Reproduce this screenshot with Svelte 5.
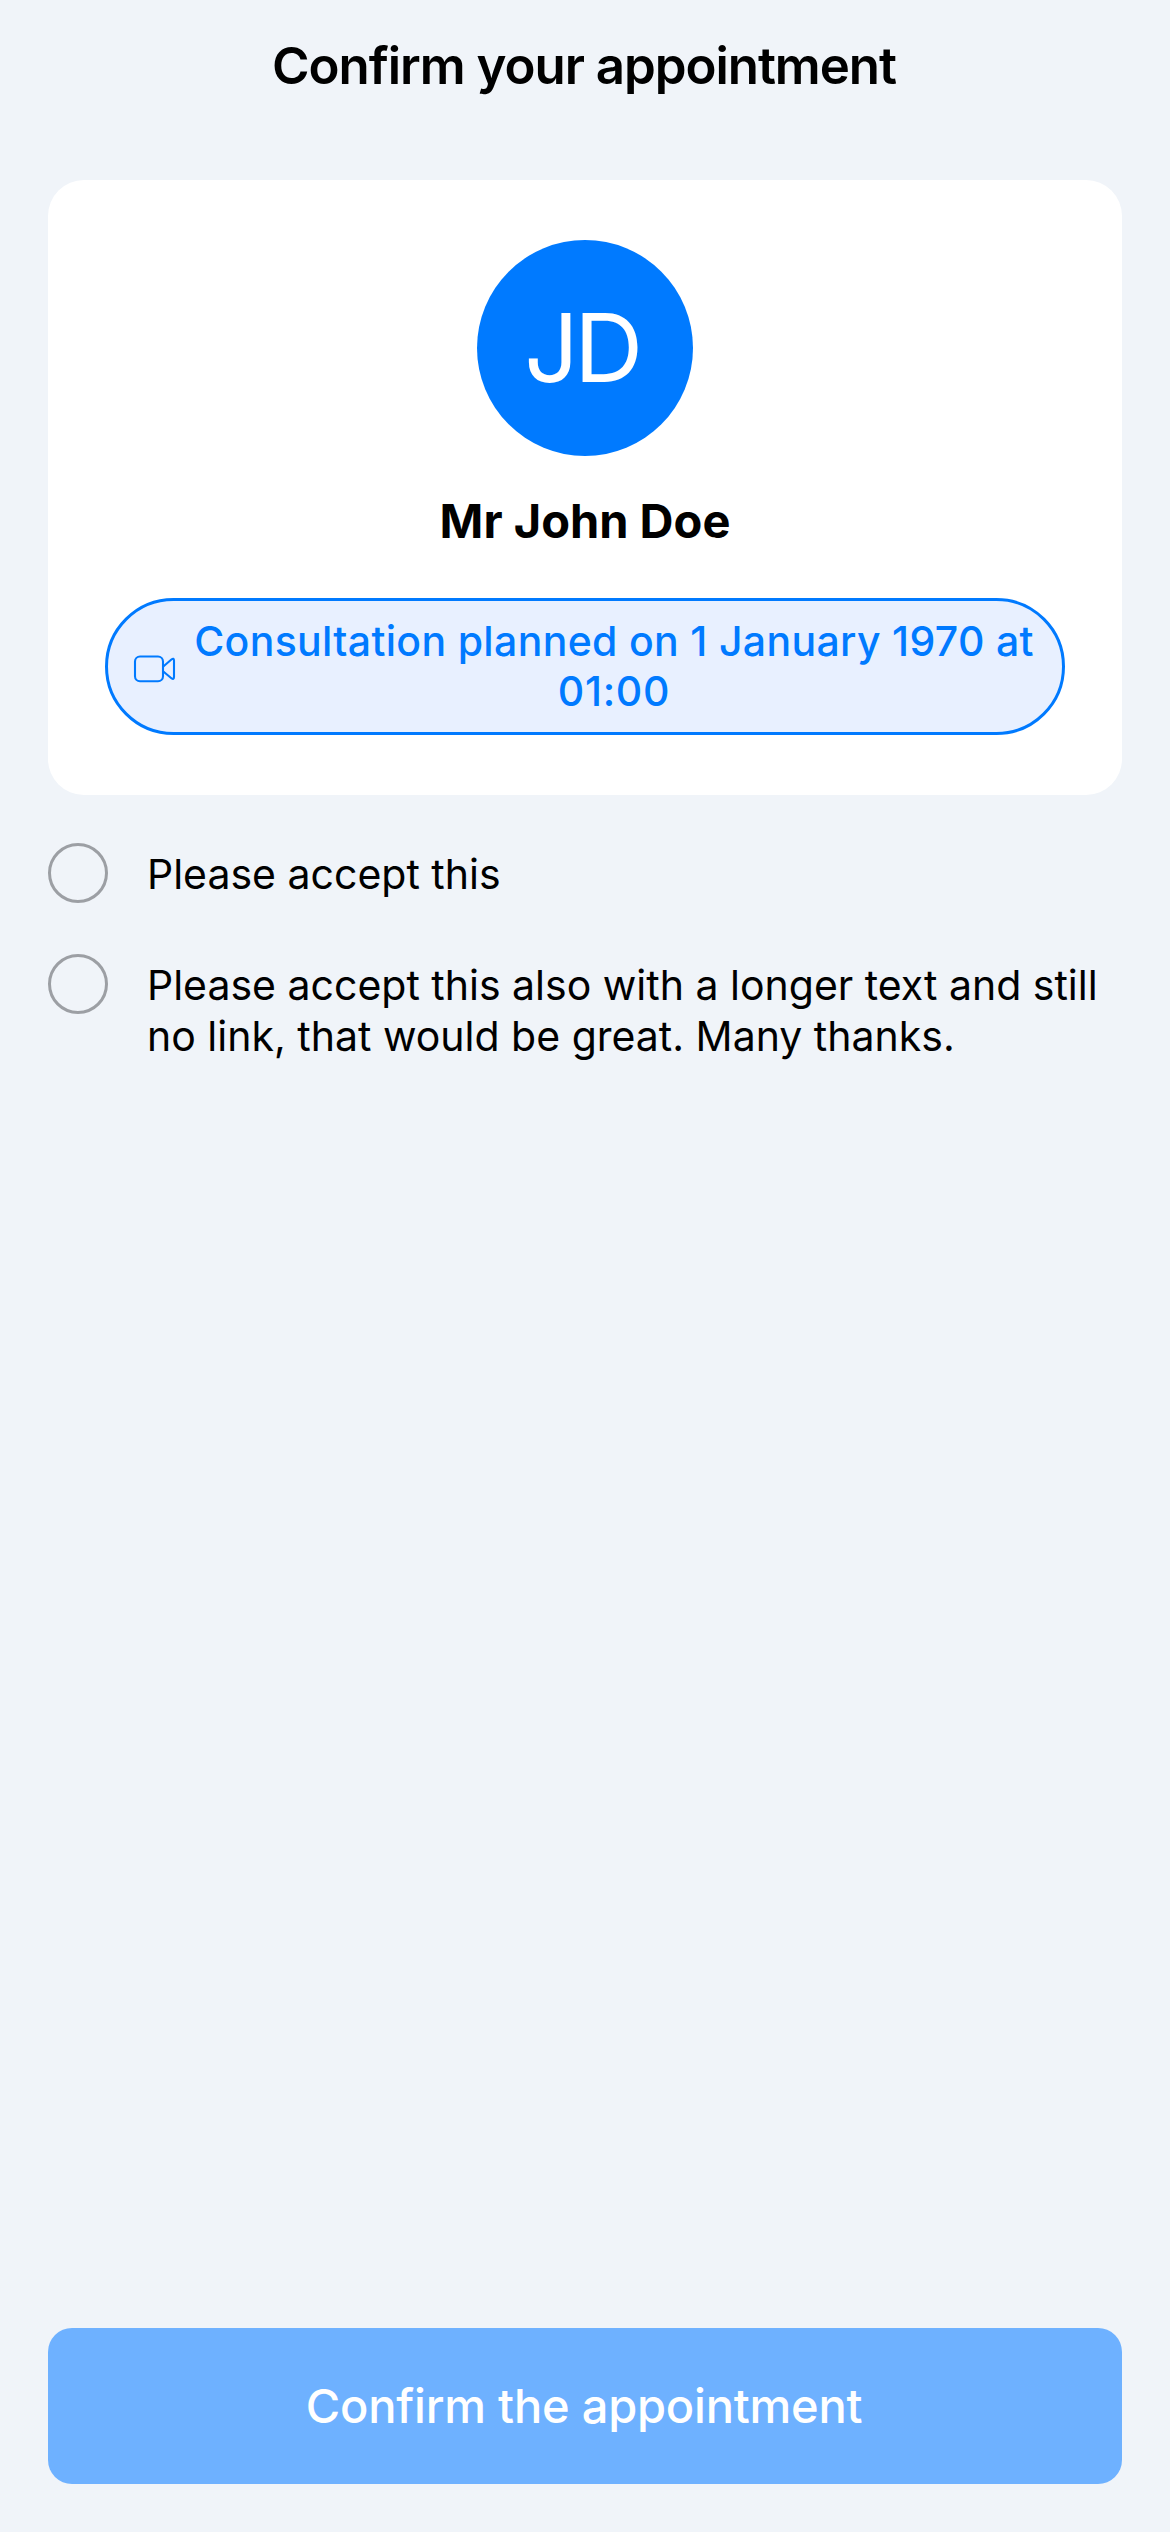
<script>
  const terms = [
    ['Please accept this'],
    ['Please accept this also with a longer text and still', 'no link, that would be great. Many thanks.'],
  ];
</script>

<main>
  <h1>Confirm your appointment</h1>
  <section class="card">
    <div class="avatar">JD</div>
    <h2>Mr John Doe</h2>
    <div class="pill">
      <svg viewBox="0 0 44 34" width="44" height="34" fill="none" stroke="currentColor" stroke-width="2.1" stroke-linejoin="round">
        <rect x="3" y="6.500" width="28" height="24.700" rx="5" />
        <path d="M31 16.700 L39.400 9.500 Q42 7.500 42 10.500 V27 Q42 30.200 39.400 28.200 L31 21.200" />
      </svg>
      <p>Consultation planned on 1 January 1970 at<br /><span class="time">01:00</span></p>
    </div>
  </section>
  <div class="terms">
    {#each terms as lines}
      <label class="term">
        <span class="radio"></span>
        <span class="copy">{#each lines as line}<span class="line">{line}</span>{/each}</span>
      </label>
    {/each}
  </div>
  <button>Confirm the appointment</button>
</main>

<style>
  :global(body) { background: #f0f4f9; }
  main { box-sizing: border-box; width: 1170px; height: 2532px; padding: 36px 48px 48px; display: flex; flex-direction: column; font-family: Inter, sans-serif; color: #000; background: #f0f4f9; }
  h1 { box-sizing: border-box; margin: 0; height: 144px; padding-right: 2px; font-size: 51px; line-height: 59px; font-weight: 600; text-align: center; letter-spacing: -1.05px; }
  .card { box-sizing: border-box; height: 615px; background: #fff; border-radius: 36px; padding: 60px 57px; display: flex; flex-direction: column; align-items: center; }
  .avatar { box-sizing: border-box; width: 216px; height: 216px; padding-right: 7px; border-radius: 50%; background: #007aff; color: #fff; font-size: 95.4px; line-height: 215px; text-align: center; letter-spacing: -4.4px; }
  h2 { margin: 34px 0 0; font-size: 47px; line-height: 61px; font-weight: 700; }
  .pill { box-sizing: border-box; width: 960px; height: 137px; margin-top: 47px; border: 3px solid #007aff; border-radius: 69px; background: #e8f0ff; color: #007aff; display: flex; align-items: center; padding: 0 24px; gap: 14px; }
  .pill p { flex: 1; margin: -1px 0 0; white-space: nowrap; text-align: center; font-weight: 500; font-size: 41px; line-height: 50px; letter-spacing: 0.33px; }
  .time { letter-spacing: 0.7px; }
  .terms { display: flex; flex-direction: column; gap: 51px; margin-top: 48px; }
  .term { display: flex; gap: 39px; font-size: 41px; line-height: 51px; }
  .copy { padding-top: 6px; white-space: nowrap; }
  .line { display: block; }
  .radio { box-sizing: border-box; width: 60px; height: 60px; border: 3px solid #9c9fa4; border-radius: 50%; }
  button { margin-top: auto; height: 156px; padding: 0 2px 0 0; border: 0; border-radius: 24px; background: #6eb1ff; color: #fff; font: 500 47px/56px Inter, sans-serif; letter-spacing: -0.21px; }
</style>
